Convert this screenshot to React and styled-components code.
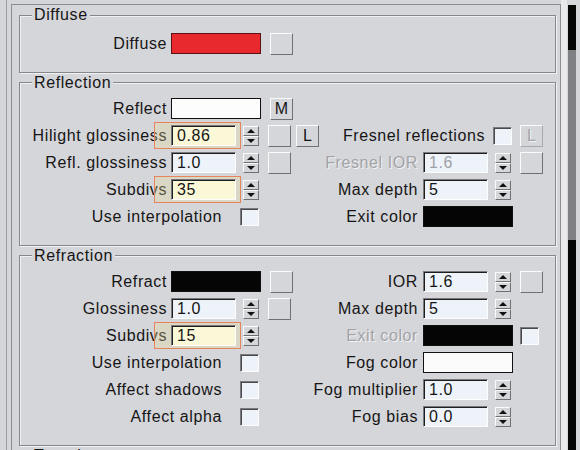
import styled, { createGlobalStyle } from "styled-components";

const GlobalStyle = createGlobalStyle`
  html, body {
    margin: 0;
    padding: 0;
    height: 450px;
    overflow: hidden;
    background: #d5d6da;
  }
  body {
    font-family: "Liberation Sans", Arial, sans-serif;
    font-size: 16px;
    color: #151515;
  }
`;

export default function App() {
  return (
    <Screen>
      <GlobalStyle />
      <Frame>
        <Panel>
          <Group $top={6}>
            <Legend>Diffuse</Legend>
            <Columns>
              <Column>
                <Row>
                  <Label $w={147} $gap={4}>Diffuse</Label>
                  <Swatch $color="#e8292d" $edge="#5a1214" />
                  <Btn $ml={9} />
                </Row>
              </Column>
            </Columns>
          </Group>

          <Group>
            <Legend>Reflection</Legend>
            <Columns>
              <Column>
                <Row>
                  <Label $w={147} $gap={4}>Reflect</Label>
                  <Swatch $color="#fdfdfd" />
                  <Btn $ml={9}>M</Btn>
                </Row>
                <Row>
                  <Label $w={147} $gap={4}>Hilight glossiness</Label>
                  <Spinner value="0.86" highlight />
                  <Btn $ml={9} />
                  <Btn $ml={5}>L</Btn>
                </Row>
                <Row>
                  <Label $w={147} $gap={4}>Refl. glossiness</Label>
                  <Spinner value="1.0" />
                  <Btn $ml={9} />
                </Row>
                <Row>
                  <Label $w={147} $gap={4}>Subdivs</Label>
                  <Spinner value="35" highlight />
                </Row>
                <Row>
                  <Label $w={202} $gap={18}>Use interpolation</Label>
                  <Check />
                </Row>
              </Column>
              <Column>
                <Row />
                <Row>
                  <Label $w={165} $gap={8}>Fresnel reflections</Label>
                  <Check />
                  <Btn $ml={8} $disabled>L</Btn>
                </Row>
                <Row>
                  <Label $w={98} $gap={5} $disabled>Fresnel IOR</Label>
                  <Spinner value="1.6" disabled />
                  <Btn $ml={9} />
                </Row>
                <Row>
                  <Label $w={98} $gap={5}>Max depth</Label>
                  <Spinner value="5" />
                </Row>
                <Row>
                  <Label $w={98} $gap={5}>Exit color</Label>
                  <Swatch $color="#050505" />
                </Row>
              </Column>
            </Columns>
          </Group>

          <Group>
            <Legend>Refraction</Legend>
            <Columns>
              <Column>
                <Row>
                  <Label $w={147} $gap={4}>Refract</Label>
                  <Swatch $color="#050505" />
                  <Btn $ml={9} />
                </Row>
                <Row>
                  <Label $w={147} $gap={4}>Glossiness</Label>
                  <Spinner value="1.0" />
                  <Btn $ml={9} />
                </Row>
                <Row>
                  <Label $w={147} $gap={4}>Subdivs</Label>
                  <Spinner value="15" highlight />
                </Row>
                <Row>
                  <Label $w={202} $gap={18}>Use interpolation</Label>
                  <Check />
                </Row>
                <Row>
                  <Label $w={202} $gap={18}>Affect shadows</Label>
                  <Check />
                </Row>
                <Row>
                  <Label $w={202} $gap={18}>Affect alpha</Label>
                  <Check />
                </Row>
              </Column>
              <Column>
                <Row>
                  <Label $w={98} $gap={5}>IOR</Label>
                  <Spinner value="1.6" />
                  <Btn $ml={9} />
                </Row>
                <Row>
                  <Label $w={98} $gap={5}>Max depth</Label>
                  <Spinner value="5" />
                </Row>
                <Row>
                  <Label $w={98} $gap={5} $disabled>Exit color</Label>
                  <Swatch $color="#050505" />
                  <Check $ml={7} />
                </Row>
                <Row>
                  <Label $w={98} $gap={5}>Fog color</Label>
                  <Swatch $color="#fbfbfb" />
                </Row>
                <Row>
                  <Label $w={98} $gap={5}>Fog multiplier</Label>
                  <Spinner value="1.0" />
                </Row>
                <Row>
                  <Label $w={98} $gap={5}>Fog bias</Label>
                  <Spinner value="0.0" />
                </Row>
              </Column>
            </Columns>
          </Group>

          <Group>
            <Legend>Translucency</Legend>
          </Group>
        </Panel>
      </Frame>
      <Gutter>
        <Track>
          <Segment $h="45px" $color="#050505" />
          <Segment $h="190px" $color="#7f8084" />
          <Segment $color="#050505" />
        </Track>
      </Gutter>
    </Screen>
  );
}

function Spinner({ value, highlight, disabled }) {
  return (
    <>
      {highlight ? (
        <HlWrap>
          <HlBox />
          <Field $hl>{value}</Field>
        </HlWrap>
      ) : (
        <Field $disabled={disabled}>{value}</Field>
      )}
      <Spin>
        <SpinHalf>
          <Arrow $up />
        </SpinHalf>
        <SpinHalf>
          <Arrow />
        </SpinHalf>
      </Spin>
    </>
  );
}

const Screen = styled.div`
  display: flex;
  height: 450px;
  overflow: hidden;
`;

const Frame = styled.div`
  flex: 1;
  display: flex;
  margin-left: 6px;
  padding-left: 4px;
  border-left: 1px solid #9c9da1;
`;

const Panel = styled.div`
  flex: 1;
  display: flex;
  flex-direction: column;
  margin-top: 4px;
  padding: 1px 4px 0 7px;
  border: 1px solid #8d8e92;
  border-bottom: none;
`;

const Group = styled.fieldset`
  margin: 0 0 1px;
  padding: ${({ $top }) => $top ?? 3.5}px 0 14.5px;
  min-width: 0;
  border: 1px solid #86878b;
  box-shadow: inset 1px 1px 0 #f1f1f3, 1px 1px 0 #f1f1f3;
`;

const Legend = styled.legend`
  margin-left: 12px;
  padding: 0 2px;
  line-height: 18px;
  font-size: 16px;
  letter-spacing: 0.6px;
  background: #d5d6da;
`;

const Columns = styled.div`
  display: grid;
  grid-template-columns: 300px 1fr;
`;

const Column = styled.div`
  display: flex;
  flex-direction: column;
`;

const Row = styled.div`
  display: flex;
  align-items: center;
  height: 27px;
`;

const Label = styled.span`
  flex: none;
  display: flex;
  justify-content: flex-end;
  width: ${({ $w }) => $w}px;
  margin-right: ${({ $gap }) => $gap}px;
  white-space: nowrap;
  letter-spacing: 0.6px;
  color: ${({ $disabled }) => ($disabled ? "#a2a3a7" : "#151515")};
  text-shadow: ${({ $disabled }) => ($disabled ? "1px 1px 0 #f3f3f5" : "none")};
`;

const Swatch = styled.span`
  flex: none;
  box-sizing: border-box;
  width: 90px;
  height: 21px;
  background: ${({ $color }) => $color};
  border: 1px solid ${({ $edge }) => $edge || "#111"};
`;

const Btn = styled.span`
  flex: none;
  box-sizing: border-box;
  display: flex;
  align-items: center;
  justify-content: center;
  width: 23px;
  height: 22px;
  margin-left: ${({ $ml }) => $ml ?? 0}px;
  border: 1px solid;
  border-color: ${({ $disabled }) =>
    $disabled ? "#fbfbfc #a8a9ad #a8a9ad #fbfbfc" : "#fbfbfc #707175 #707175 #fbfbfc"};
  background: #d5d6da;
  font-size: 16px;
  color: ${({ $disabled }) => ($disabled ? "#a2a3a7" : "#151515")};
  text-shadow: ${({ $disabled }) => ($disabled ? "1px 1px 0 #f3f3f5" : "none")};
`;

const Field = styled.span`
  position: relative;
  z-index: 1;
  flex: none;
  box-sizing: border-box;
  display: flex;
  align-items: center;
  width: 65px;
  height: 21px;
  padding-left: 5px;
  border: 1px solid;
  border-color: #7a7a7e #fdfdfd #fdfdfd #7a7a7e;
  box-shadow: inset 1px 1px 0 #1e1e1e;
  background: ${({ $hl }) => ($hl ? "#fbf8d8" : "#eef3fa")};
  font-size: 16px;
  letter-spacing: 0.6px;
  color: ${({ $disabled }) => ($disabled ? "#a0a1a5" : "#151515")};
`;

const HlWrap = styled.span`
  position: relative;
  display: flex;
`;

const HlBox = styled.span`
  position: absolute;
  left: -17px;
  right: -5px;
  top: -3px;
  bottom: -3px;
  z-index: 0;
  border: 1.5px solid #e6845c;
  background: rgba(232, 222, 150, 0.3);
`;

const Spin = styled.span`
  flex: none;
  display: flex;
  flex-direction: column;
  width: 16px;
  height: 20px;
  margin-left: 7px;
`;

const SpinHalf = styled.span`
  flex: 1;
  display: flex;
  align-items: center;
  justify-content: center;
  border: 1px solid;
  border-color: #fbfbfc #707175 #707175 #fbfbfc;
  background: #d5d6da;
`;

const Arrow = styled.span`
  width: 0;
  height: 0;
  border-left: 4px solid transparent;
  border-right: 4px solid transparent;
  ${({ $up }) =>
    $up ? "border-bottom: 4px solid #111;" : "border-top: 4px solid #111;"}
`;

const Check = styled.span`
  flex: none;
  box-sizing: border-box;
  width: 19px;
  height: 18px;
  margin-left: ${({ $ml }) => $ml ?? 0}px;
  border: 1px solid;
  border-color: #7a7a7e #fdfdfd #fdfdfd #7a7a7e;
  box-shadow: inset 1px 1px 0 #4a4a4e;
  background: #eef3fa;
`;

const Gutter = styled.div`
  flex: none;
  display: flex;
  box-sizing: border-box;
  width: 19px;
  padding: 5px 4px 0 7px;
  background: linear-gradient(to right, #e9e9eb 0 6px, transparent 6px);
`;

const Track = styled.div`
  flex: 1;
  display: flex;
  flex-direction: column;
`;

const Segment = styled.div`
  flex: ${({ $h }) => ($h ? "none" : "1")};
  height: ${({ $h }) => $h || "auto"};
  background: ${({ $color }) => $color};
`;
